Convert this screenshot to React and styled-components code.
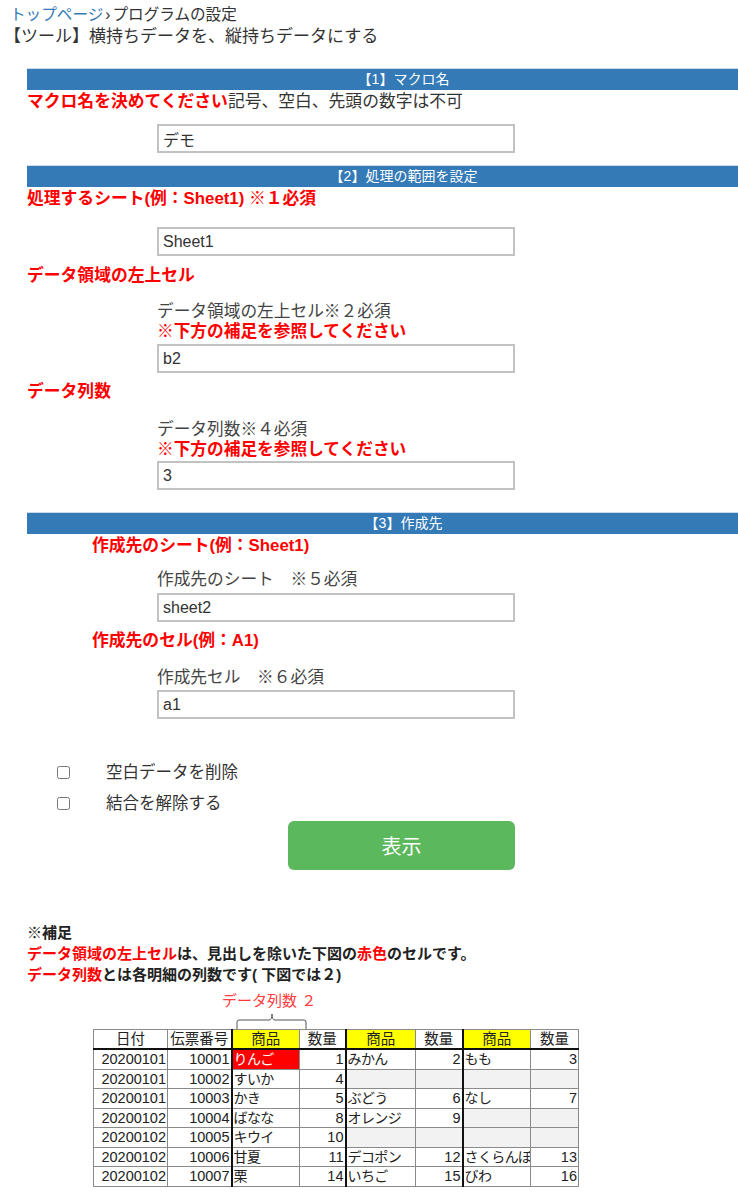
import React from "react";
import styled, { createGlobalStyle } from "styled-components";

const GlobalStyle = createGlobalStyle`
  html, body {
    margin: 0;
    padding: 0;
    background: #fff;
  }
  body {
    font-family: "Liberation Sans", "Noto Sans CJK JP", sans-serif;
    color: #333;
    font-size: 16px;
  }
`;

const Page = styled.div`
  width: 738px;
  padding-bottom: 20px;
`;

const Breadcrumb = styled.div`
  margin-top: 4px;
  padding-left: 10px;
  font-size: 15.6px;
  line-height: 22px;
  a {
    color: #337ab7;
    text-decoration: none;
  }
  span {
    margin: 0 2px;
  }
`;

const Title = styled.h1`
  margin: 0;
  padding-left: 4px;
  font-size: 17px;
  font-weight: normal;
  line-height: 22px;
`;

const Bar = styled.div`
  margin: ${(p) => p.$top}px 0 0 27px;
  height: 21px;
  padding-left: 42px;
  background: #337ab7;
  border-top: 1px solid #c9dbec;
  color: #fff;
  font-size: 14px;
  line-height: 21px;
  text-align: center;
`;

const Heading = styled.div`
  margin: ${(p) => p.$top || 0}px 0 0 ${(p) => (p.$indent ? 92 : 27)}px;
  font-size: 16.8px;
  line-height: 24px;
  font-weight: bold;
  color: #ff0000;
  b {
    font-weight: normal;
    color: #333;
  }
`;

const Field = styled.div`
  margin: ${(p) => p.$top}px 0 0 157px;
  width: 358px;
`;

const Label = styled.div`
  font-size: 16.7px;
  line-height: 20px;
  color: #444;
`;

const Note = styled.div`
  font-size: 16.7px;
  line-height: 20px;
  font-weight: bold;
  color: #ff0000;
`;

const Input = styled.input`
  display: block;
  box-sizing: border-box;
  width: 358px;
  height: 29px;
  margin-top: ${(p) => p.$top || 0}px;
  padding: 0 4px;
  border: 2px solid #c2c2c2;
  font-family: "Liberation Sans", "Noto Sans CJK JP", sans-serif;
  font-size: 16px;
  color: #333;
  outline: none;
`;

const Checks = styled.div`
  margin-top: 36px;
  display: flex;
  flex-direction: column;
`;

const CheckRow = styled.label`
  display: flex;
  align-items: center;
  height: 31px;
  padding-left: 57px;
  gap: 36px;
  font-size: 16.5px;
  input {
    width: 13px;
    height: 13px;
    margin: 3px 0 0 0;
  }
`;

const Button = styled.button`
  display: block;
  margin: 4px 0 0 288px;
  width: 227px;
  height: 49px;
  border: none;
  border-radius: 6px;
  background: #5cb85c;
  color: #fff;
  font-family: "Liberation Sans", "Noto Sans CJK JP", sans-serif;
  font-size: 20px;
`;

const Supplement = styled.div`
  margin: 52px 0 0 27px;
  font-size: 15px;
  line-height: 21px;
  font-weight: bold;
  color: #222;
  em {
    font-style: normal;
    color: #ff0000;
  }
`;

const Figure = styled.div`
  margin: 5px 0 0 93px;
`;

const Caption = styled.div`
  margin-left: 129px;
  font-size: 15px;
  line-height: 22px;
  color: #ff3b3b;
`;

const Brace = styled.svg`
  display: block;
  margin-left: 143px;
`;

const Sheet = styled.table`
  border-collapse: collapse;
  table-layout: fixed;
  width: 485px;
  font-family: "Liberation Sans", "Noto Sans CJK JP", sans-serif;
  font-size: 14.5px;
  color: #222;
  border: 1px solid #666;
`;

const Cell = styled.td`
  height: 18.5px;
  padding: 0 1px;
  line-height: 18px;
  white-space: nowrap;
  overflow: hidden;
  border: 1px solid #8a8a8a;
  border-left: ${(p) => (p.$thick ? "2px solid #111" : "1px solid #8a8a8a")};
  text-align: ${(p) => p.$align || "left"};
  background: ${(p) => p.$bg || "#fff"};
  color: ${(p) => p.$color || "#222"};
  font-size: ${(p) => (p.$item ? "14px" : "14.5px")};
  letter-spacing: ${(p) => (p.$item ? "-0.6px" : "0")};
`;

const HeadCell = styled(Cell).attrs({ as: "th" })`
  font-weight: normal;
  text-align: center;
  border-bottom: 2px solid #111;
  height: 18px;
`;

const widths = [74, 64, 68, 46, 70, 47, 68, 48];
const heads = ["日付", "伝票番号", "商品", "数量", "商品", "数量", "商品", "数量"];
const rows = [
  ["20200101", "10001", "りんご", "1", "みかん", "2", "もも", "3"],
  ["20200101", "10002", "すいか", "4", "", "", "", ""],
  ["20200101", "10003", "かき", "5", "ぶどう", "6", "なし", "7"],
  ["20200102", "10004", "ばなな", "8", "オレンジ", "9", "", ""],
  ["20200102", "10005", "キウイ", "10", "", "", "", ""],
  ["20200102", "10006", "甘夏", "11", "デコポン", "12", "さくらんぼ", "13"],
  ["20200102", "10007", "栗", "14", "いちご", "15", "びわ", "16"],
];

const isThick = (i) => i === 2 || i === 4 || i === 6;

const cellBg = (r, i, v) => {
  if (r === 0 && i === 2) return "#ff0000";
  if (i >= 4 && v === "") return "#f2f2f2";
  return "#fff";
};

const App = () => {
  return (
    <Page>
      <GlobalStyle />
      <Breadcrumb>
        <a href="#">トップページ</a>
        <span>›</span>プログラムの設定
      </Breadcrumb>
      <Title>【ツール】横持ちデータを、縦持ちデータにする</Title>

      <Bar $top={20}>【1】マクロ名</Bar>
      <Heading>
        マクロ名を決めてください<b>記号、空白、先頭の数字は不可</b>
      </Heading>
      <Field $top={10}>
        <Input defaultValue="デモ" />
      </Field>

      <Bar $top={12}>【2】処理の範囲を設定</Bar>
      <Heading>処理するシート(例：Sheet1) ※１必須</Heading>
      <Field $top={16}>
        <Input defaultValue="Sheet1" />
      </Field>
      <Heading $top={8}>データ領域の左上セル</Heading>
      <Field $top={14}>
        <Label>データ領域の左上セル※２必須</Label>
        <Note>※下方の補足を参照してください</Note>
        <Input $top={2} defaultValue="b2" />
      </Field>
      <Heading $top={7}>データ列数</Heading>
      <Field $top={16}>
        <Label>データ列数※４必須</Label>
        <Note>※下方の補足を参照してください</Note>
        <Input $top={1} defaultValue="3" />
      </Field>

      <Bar $top={22}>【3】作成先</Bar>
      <Heading $indent>作成先のシート(例：Sheet1)</Heading>
      <Field $top={12}>
        <Label>作成先のシート　※５必須</Label>
        <Input $top={3} defaultValue="sheet2" />
      </Field>
      <Heading $indent $top={7}>作成先のセル(例：A1)</Heading>
      <Field $top={15}>
        <Label>作成先セル　※６必須</Label>
        <Input $top={2} defaultValue="a1" />
      </Field>

      <Checks>
        <CheckRow>
          <input type="checkbox" />
          空白データを削除
        </CheckRow>
        <CheckRow>
          <input type="checkbox" />
          結合を解除する
        </CheckRow>
      </Checks>
      <Button>表示</Button>

      <Supplement>
        <div>※補足</div>
        <div>
          <em>データ領域の左上セル</em>は、見出しを除いた下図の<em>赤色</em>のセルです。
        </div>
        <div>
          <em>データ列数</em>とは各明細の列数です( 下図では２)
        </div>
      </Supplement>

      <Figure>
        <Caption>データ列数 ２</Caption>
        <Brace width="72" height="17" viewBox="0 0 72 17">
          <path
            d="M1 17 V10 Q1 8 3 8 H33 Q36 8 36 2 Q36 8 39 8 H68 Q70 8 70 10 V17"
            fill="none"
            stroke="#555"
            strokeWidth="1"
          />
        </Brace>
        <Sheet>
          <colgroup>
            {widths.map((w, i) => (
              <col key={i} style={{ width: w }} />
            ))}
          </colgroup>
          <thead>
            <tr>
              {heads.map((h, i) => (
                <HeadCell
                  key={i}
                  $thick={isThick(i)}
                  $bg={h === "商品" ? "#ffff00" : "#fff"}
                >
                  {h}
                </HeadCell>
              ))}
            </tr>
          </thead>
          <tbody>
            {rows.map((row, r) => (
              <tr key={r}>
                {row.map((v, i) => (
                  <Cell
                    key={i}
                    $thick={isThick(i)}
                    $item={isThick(i)}
                    $align={isThick(i) ? "left" : "right"}
                    $bg={cellBg(r, i, v)}
                    $color={r === 0 && i === 2 ? "#fff" : undefined}
                  >
                    {v}
                  </Cell>
                ))}
              </tr>
            ))}
          </tbody>
        </Sheet>
      </Figure>
    </Page>
  );
};

export default App;
